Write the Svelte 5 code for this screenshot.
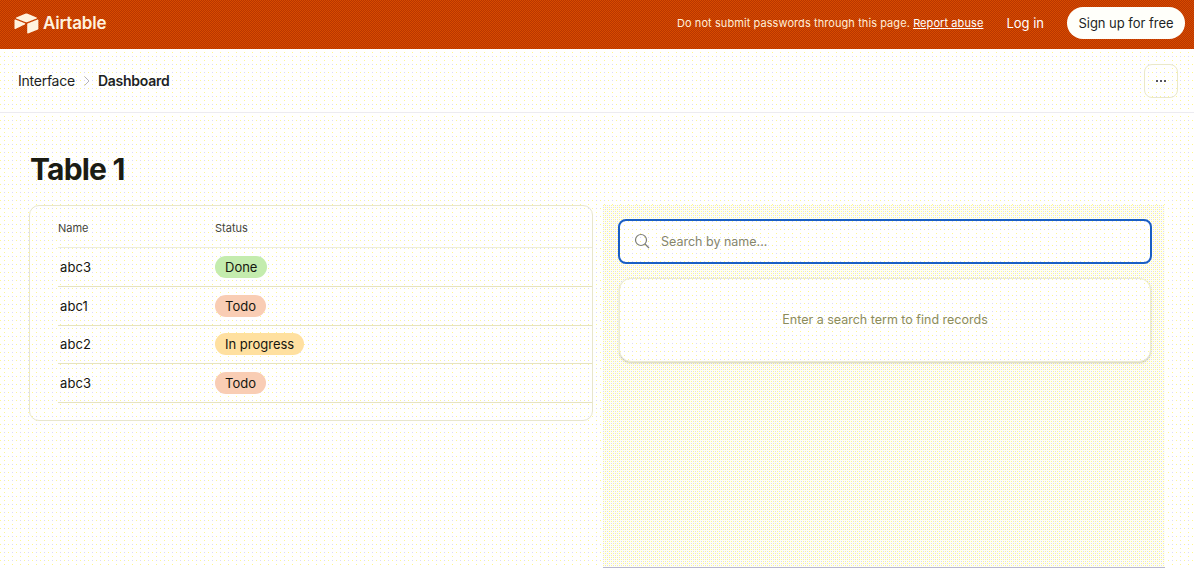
<script>
  const rows = [
    { name: 'abc3', status: 'Done', tone: 'done' },
    { name: 'abc1', status: 'Todo', tone: 'todo' },
    { name: 'abc2', status: 'In progress', tone: 'progress' },
    { name: 'abc3', status: 'Todo', tone: 'todo' }
  ];
</script>

<div class="page">
  <header class="topbar">
    <div class="brand">
      <svg class="logo" viewBox="0 0 200 170" aria-hidden="true">
        <path d="M90.04 12.37 24.08 39.66c-3.67 1.52-3.63 6.73.06 8.19l66.24 26.27a24.58 24.58 0 0 0 18.12 0l66.23-26.27c3.69-1.46 3.73-6.67.06-8.19l-65.96-27.29a24.58 24.58 0 0 0-18.79 0"/>
        <path d="M105.31 88.46v65.62c0 3.12 3.15 5.26 6.05 4.11l73.81-28.65a4.42 4.42 0 0 0 2.79-4.11V59.82c0-3.12-3.15-5.26-6.05-4.11l-73.81 28.65a4.42 4.42 0 0 0-2.79 4.1"/>
        <path d="m88.08 91.85-21.9 10.58-2.23 1.07-46.24 22.16c-2.93 1.41-6.67-.72-6.67-3.98V60.08c0-1.18.6-2.2 1.41-2.96a5 5 0 0 1 1.12-.84c1.1-.66 2.68-.84 4.02-.31l70.12 27.78c3.56 1.41 3.84 6.41.37 8.1"/>
      </svg>
      <span class="wordmark">Airtable</span>
    </div>
    <div class="top-actions">
      <span class="notice">Do not submit passwords through this page. <a href="#abuse">Report abuse</a></span>
      <span class="login">Log in</span>
      <span class="signup">Sign up for free</span>
    </div>
  </header>

  <nav class="crumbs">
    <span class="crumb">Interface</span>
    <svg class="chevron" viewBox="0 0 8 12" aria-hidden="true"><path d="M1.5 1.5 6 6l-4.500 4.500"/></svg>
    <span class="crumb current">Dashboard</span>
    <button class="more" aria-label="More"><i></i><i></i><i></i></button>
  </nav>

  <main class="content">
    <h1>Table 1</h1>
    <div class="columns">
      <section class="card table-card">
        <div class="row head">
          <span class="name">Name</span>
          <span>Status</span>
        </div>
        {#each rows as row}
          <div class="row">
            <span class="name cell">{row.name}</span>
            <span class="pill {row.tone}">{row.status}</span>
          </div>
        {/each}
      </section>

      <section class="side">
        <div class="search">
          <svg class="glass" viewBox="0 0 16 16" aria-hidden="true"><circle cx="7" cy="7" r="5.500"/><path d="m11 11 4 4"/></svg>
          <span>Search by name...</span>
        </div>
        <div class="empty">Enter a search term to find records</div>
      </section>
    </div>
  </main>
</div>

<style>
  :global(body) {
    margin: 0;
    background: #fff;
  }
  .page {
    --yellow-dot: conic-gradient(from 0deg at 1px 1px, transparent 75%, #fff78f 0);
    --violet-dot: conic-gradient(from 0deg at 1px 1px, transparent 75%, #d9d8f7 0);
    height: 568px;
    overflow: hidden;
    display: flex;
    flex-direction: column;
    font-family: Inter, "Liberation Sans", sans-serif;
    color: #1d1f25;
    background-color: #fff;
    background-image: var(--yellow-dot), var(--yellow-dot), var(--violet-dot);
    background-size: 8px 8px;
    background-position: 0 0, 4px 4px, 4px 0;
  }
  .topbar {
    height: 49px;
    flex: none;
    box-sizing: border-box;
    display: flex;
    align-items: center;
    justify-content: space-between;
    padding: 0 9px 3px 13px;
    color: #fff;
    background-image: conic-gradient(#b83700 25%, #d84a00 0 50%, #b83700 0 75%, #d84a00 0);
    background-size: 2px 2px;
  }
  .brand {
    display: flex;
    align-items: center;
    gap: 3px;
  }
  .logo {
    width: 27px;
    height: 23px;
    fill: #fff3df;
  }
  .wordmark {
    font-size: 17px;
    font-weight: 600;
    letter-spacing: -0.2px;
    color: #fff3df;
  }
  .top-actions {
    display: flex;
    align-items: center;
  }
  .notice {
    font-size: 11px;
    letter-spacing: 0.08px;
    color: #ffeed8;
  }
  .notice a {
    color: #fff;
  }
  .login {
    margin-left: 23px;
    font-size: 13px;
    color: #fff;
  }
  .signup {
    margin-left: 23px;
    width: 118px;
    height: 32px;
    display: flex;
    align-items: center;
    justify-content: center;
    border-radius: 16px;
    background: #fffffa;
    color: #1d1f25;
    font-size: 13px;
    letter-spacing: -0.03px;
  }
  .crumbs {
    height: 64px;
    flex: none;
    box-sizing: border-box;
    display: flex;
    align-items: center;
    padding: 0 16px 0 18px;
    border-bottom: 1px solid #ecebf0;
    font-size: 14px;
  }
  .crumb {
    letter-spacing: -0.25px;
  }
  .current {
    font-weight: 600;
  }
  .chevron {
    width: 8px;
    height: 12px;
    margin: 0 7px 0 8px;
    fill: none;
    stroke: #b5b4bb;
    stroke-width: 1;
  }
  .more {
    margin-left: auto;
    width: 34px;
    height: 34px;
    padding: 0;
    display: flex;
    align-items: center;
    justify-content: center;
    gap: 2px;
    border: 1px solid #ebe9c8;
    border-radius: 8px;
    background: transparent;
  }
  .more i {
    width: 2px;
    height: 2px;
    background: #55555c;
  }
  .content {
    flex: 1;
    min-height: 0;
    display: flex;
    flex-direction: column;
    padding: 0 29px;
  }
  h1 {
    margin: 37px 0 17px 1px;
    font-size: 30px;
    line-height: 38px;
    font-weight: 700;
    letter-spacing: -0.8px;
    color: #1b1c14;
  }
  .columns {
    flex: 1;
    min-height: 0;
    display: grid;
    grid-template-columns: 564px 562px;
    gap: 10px;
  }
  .table-card {
    align-self: start;
    box-sizing: border-box;
    height: 216px;
    padding: 4px 0 0 28px;
    border: 1px solid #e8e6cc;
    border-radius: 10px;
  }
  .row {
    height: 38.750px;
    box-sizing: border-box;
    display: flex;
    align-items: center;
    border-bottom: 1px solid #e6e3bf;
    font-size: 13px;
    color: #15160f;
  }
  .row.head {
    height: 38px;
    padding-bottom: 1px;
    font-size: 11px;
    color: #44453c;
    border-bottom-color: #eeeeda;
  }
  .name {
    width: 157px;
    flex: none;
  }
  .cell {
    padding-left: 2px;
    box-sizing: border-box;
    letter-spacing: 0.1px;
  }
  .pill {
    height: 22px;
    display: flex;
    align-items: center;
    padding: 0 10px;
    border-radius: 11px;
  }
  .done { background: #c4ecae; }
  .todo { background: #f9cdb4; }
  .progress { background: #ffe0a0; }
  .side {
    box-sizing: border-box;
    padding: 14px 13px 0 15px;
    background-color: #fffff4;
    background-image: var(--yellow-dot), var(--violet-dot), var(--violet-dot), var(--yellow-dot);
    background-size: 4px 4px;
    background-position: 0 0, 2px 0, 0 2px, 2px 2px;
    border-bottom: 1px solid #b9b9cf;
  }
  .search {
    box-sizing: border-box;
    height: 45px;
    display: flex;
    align-items: center;
    gap: 11px;
    padding: 0 0 1px 14px;
    border: 2px solid #1a5fc4;
    border-radius: 8px;
    background-color: #fff;
    background-image: var(--yellow-dot), var(--yellow-dot), var(--violet-dot);
    background-size: 8px 8px;
    background-position: 0 0, 4px 4px, 4px 0;
    color: #85856e;
    font-size: 12.500px;
  }
  .glass {
    width: 16px;
    height: 16px;
    fill: none;
    stroke: #7d7e78;
    stroke-width: 1.200;
  }
  .empty {
    box-sizing: border-box;
    margin: 14px 1px 0;
    height: 84px;
    padding-bottom: 2px;
    display: flex;
    align-items: center;
    justify-content: center;
    border: 1px solid #ebead2;
    border-radius: 12px;
    background-color: #fff;
    background-image: var(--yellow-dot), var(--yellow-dot), var(--violet-dot);
    background-size: 8px 8px;
    background-position: 0 0, 4px 4px, 4px 0;
    box-shadow: 0 1px 2px rgba(110, 110, 50, 0.3);
    color: #8c8c5c;
    font-size: 12.500px;
  }
</style>
